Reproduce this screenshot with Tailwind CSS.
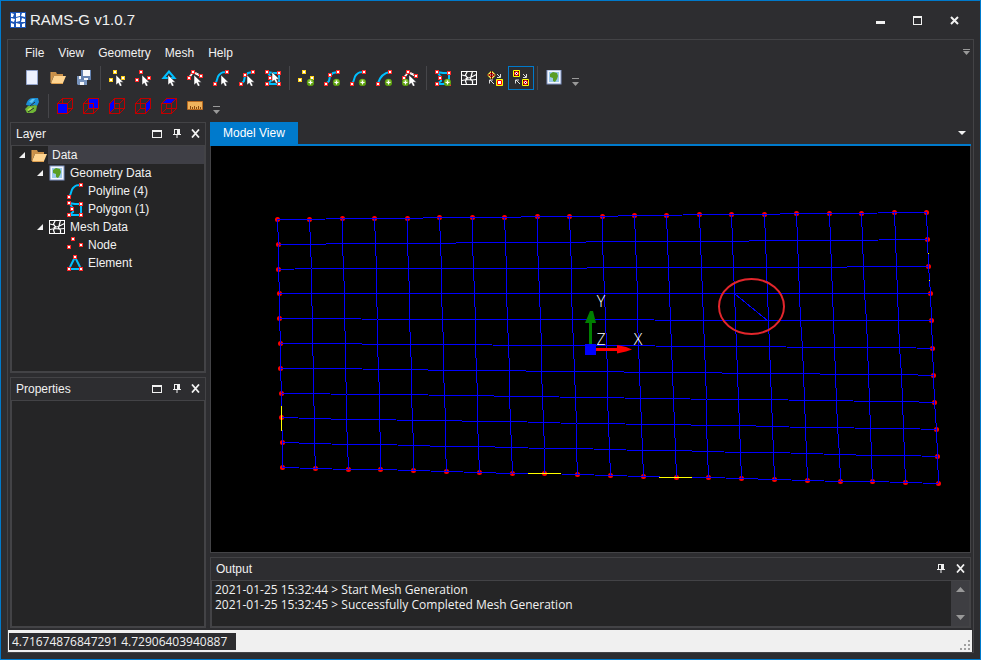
<!DOCTYPE html>
<html lang="en">
<head>
<meta charset="UTF-8">
<meta name="viewport" content="width=device-width, initial-scale=1.0">
<title>RAMS-G v1.0.7</title>
<script src="https://cdn.jsdelivr.net/npm/@tailwindcss/browser@4"></script>
</head>
<body class="bg-[#2d2d30] text-[#f1f1f1] font-['Liberation_Sans',sans-serif] text-[12px]">

<!-- icon set, all on a 16px grid -->
<svg class="hidden">
  <defs>
    <g id="red"><rect width="4" height="4" fill="#ff2a2a"/><rect x="1" y="1" width="2" height="2" fill="#fff"/></g>
    <g id="yel"><rect width="4" height="4" fill="#ffd21c"/><rect x="1" y="1" width="2" height="2" fill="#fff"/></g>
    <path id="cursor" d="M7 5v10l2.300-2 1.700 3.500 2-1-1.600-3.300H14.500z" fill="#fff" stroke="#2d2d30" stroke-width=".5"/>
    <g id="plus"><circle cx="12.500" cy="12.500" r="3.700" fill="#5c9e10"/><circle cx="12.500" cy="11.500" r="2.300" fill="#8bc53a"/><path d="M12.500 10.500v4M10.500 12.500h4" stroke="#fff" stroke-width="1.200"/></g>
    <g id="curve"><path d="M2 13C5 12 3 8 6 5S10 2 14 2" fill="none" stroke="#00bfff" stroke-width="2"/><use href="#red" y="12"/><use href="#red" x="12"/></g>
    <g id="arc"><path d="M2 13C4 7 7 3 14 2" fill="none" stroke="#00bfff" stroke-width="2"/><use href="#red" y="12"/><use href="#red" x="12"/></g>
    <g id="polyline"><path d="M2 14l3-3 1-5 3-3 5-1" fill="none" stroke="#00bfff" stroke-width="2"/><use href="#red" y="12"/><use href="#red" x="4" y="3"/><use href="#red" x="12"/></g>
    <g id="polygon"><path d="M2 2l6 1 6 0v11H2l4-3V7z" fill="none" stroke="#00bfff" stroke-width="2"/><use href="#red"/><use href="#red" x="12" y="1"/><use href="#red" x="3" y="6"/><use href="#red" y="12"/><use href="#red" x="12" y="12"/></g>
    <g id="edges"><path d="M2 8l4-6 8 4" fill="none" stroke="#fff" stroke-width="2"/><path d="M3 5l3-3 4 1M11 4l3 2" fill="none" stroke="#c88" stroke-width="1"/><use href="#red" y="6"/><use href="#red" x="4"/><use href="#red" x="12" y="4"/></g>
    <g id="nodes"><use href="#red" x="4"/><use href="#red" y="8"/><use href="#red" x="12" y="6"/></g>
    <g id="points"><use href="#yel" x="4"/><use href="#yel" y="8"/><use href="#yel" x="12" y="6"/></g>
    <g id="element"><path d="M8 2L2 14h12z" fill="none" stroke="#00bfff" stroke-width="2"/><use href="#red" x="6"/><use href="#red" y="12"/><use href="#red" x="12" y="12"/></g>
    <g id="mesh" fill="none" stroke="#fff"><path d="M.5 1.500h15v13H.5z" shape-rendering="crispEdges"/><path d="M6.500 1l-2 4 2 3-2 3 1 3M11.500 1l-1 4-1 4 2 2v3M1 5l4 1M4.500 8.500l5-1 6-3M1 10.500l5-1 4 .5 5.500-.5" stroke-width="1.200"/></g>
    <g id="folder"><path d="M1 3h5l1 2h6v2H4L1 13z" fill="#c8904a"/><path d="M1 14l3-7h12l-3 7z" fill="#ffd591"/><path d="M1 3v11l1 .5h11" fill="none" stroke="#dfa050"/></g>
    <g id="map"><rect x="1" y="1" width="14" height="14" fill="#f4f8ff" stroke="#7f93c4"/><rect x="3" y="3" width="10" height="10" fill="#9cc9ea"/><path d="M4 5l3-2 4 1 1 3-1 3-2 3-2-1V9L4 8z" fill="#5a9e24"/></g>
    <g id="cube" fill="none" stroke="#c00000" shape-rendering="crispEdges"><path d="M.5 5.500h10v10H.5zM5.500.5h10v10h-10zM.5 5.500l5-5M10.500 5.500l5-5M.5 15.500l5-5M10.500 15.500l5-5"/></g>
    <g id="float"><path d="M0 1h10v8H0zM1 3v5h8V3z" fill="#f1f1f1" fill-rule="evenodd"/></g>
    <path id="pin" d="M1 0h6v5h1v1H4.500v3h-1V6H0V5h1zM2 1v4h2V1z" fill="#f1f1f1" fill-rule="evenodd"/>
    <path id="close" d="M1 .5l7 8M8 .5l-7 8" stroke="#f1f1f1" stroke-width="1.800"/>
    <path id="expand" d="M6 0v6H0z" fill="#f1f1f1"/>
    <g id="more" fill="#999"><rect width="7" height="1"/><path d="M0 4h7L3.500 8z"/></g>
    <pattern id="dots" width="4" height="4" patternUnits="userSpaceOnUse"><path d="M0 0h1v1H0zM2 2h1v1H2z" fill="#4b4b50"/></pattern>
  </defs>
</svg>

<div class="min-h-screen flex flex-col border border-[#007acc]">

  <header class="h-[38px] flex items-center pl-2 pr-[7px]">
    <svg class="size-4 mx-px" viewBox="0 0 16 16"><path fill="#1c56b8" d="M0 0h16v16H0z"/><path fill="#fff" d="M1 1l3 1-1 3H1zM6 1h4v3L6 5zM12 1h3v4l-4-1zM1 6l4 1-1 3-3-1zM6 6l4-1v4L6 10zM12 6l3 1v3h-4zM1 11l3 1v3H1zM6 11l4 1v3H6zM12 12l3-1v4h-3z"/></svg>
    <h1 class="ml-[3px] flex-1 text-[15px]">RAMS-G v1.0.7</h1>
    <button aria-label="Minimize" class="w-[37px] flex justify-center"><svg class="w-[9px] h-[9px]"><path fill="#f1f1f1" d="M0 5h9v3H0z"/></svg></button>
    <button aria-label="Maximize" class="w-[37px] flex justify-center"><svg class="w-[9px] h-[9px]"><path fill="#f1f1f1" fill-rule="evenodd" d="M0 0h9v9H0zM1 2v6h7V2z"/></svg></button>
    <button aria-label="Close" class="w-[37px] flex justify-center"><svg class="w-[9px] h-[9px]"><path stroke="#f1f1f1" stroke-width="2" d="M1 1l7 7M8 1L1 8"/></svg></button>
  </header>

  <div class="flex-1 flex flex-col mx-1.5 mb-1.5 border border-[#434346]">

    <nav class="h-[25px] pt-px flex items-center px-[3px]">
      <svg class="w-[6px] h-[18px] mr-2"><rect width="6" height="18" fill="url(#dots)"/></svg>
      <ul class="flex flex-1 gap-[14px]">
        <li><a href="#">File</a></li>
        <li><a href="#">View</a></li>
        <li><a href="#">Geometry</a></li>
        <li><a href="#">Mesh</a></li>
        <li><a href="#">Help</a></li>
      </ul>
      <button aria-label="Menu options"><svg class="w-[7px] h-2"><path fill="#999" d="M0 0h7v1H0zM0 2h7L3.500 6z"/></svg></button>
    </nav>

    <div class="h-[26px] flex items-center pl-[3px]" role="toolbar">
      <svg class="w-[6px] h-[18px] mr-0.5"><rect width="6" height="18" fill="url(#dots)"/></svg>
      <button aria-label="New" class="w-[26px] h-6 flex items-center justify-center"><svg class="size-4"><path d="M2.500.5h11v14h-11z" fill="#edf2ff" stroke="#94a5cc"/></svg></button>
      <button aria-label="Open" class="w-[26px] h-6 flex items-center justify-center"><svg class="size-4"><use href="#folder" y="-1"/></svg></button>
      <button aria-label="Save all" class="w-[26px] h-6 flex items-center justify-center"><svg class="size-4"><path fill="#7894bd" d="M1 6h10v9H2l-1-1z"/><path fill="#f5f7fb" d="M3 6h6v3H3zM4 12h4v3H4z"/><path fill="#6482b0" d="M5 0h10v10H5z"/><path fill="#f5f7fb" d="M7 0h7v6H7zM8 8h4v2H8z"/></svg></button>
      <span class="w-[7px] h-6 flex justify-center"><i class="w-px bg-[#46464a]"></i></span>
      <button aria-label="Select point" class="w-[26px] h-6 flex items-center justify-center"><svg class="size-4"><use href="#points"/><use href="#cursor"/></svg></button>
      <button aria-label="Select node" class="w-[26px] h-6 flex items-center justify-center"><svg class="size-4"><use href="#nodes"/><use href="#cursor"/></svg></button>
      <button aria-label="Select element" class="w-[26px] h-6 flex items-center justify-center"><svg class="size-4"><path d="M8 1.500L2.500 8h11z" fill="none" stroke="#00bfff" stroke-width="2"/><use href="#cursor"/></svg></button>
      <button aria-label="Select edge" class="w-[26px] h-6 flex items-center justify-center"><svg class="size-4"><use href="#edges"/><use href="#cursor"/></svg></button>
      <button aria-label="Select curve" class="w-[26px] h-6 flex items-center justify-center"><svg class="size-4"><use href="#curve"/><use href="#cursor" x="1"/></svg></button>
      <button aria-label="Select polyline" class="w-[26px] h-6 flex items-center justify-center"><svg class="size-4"><use href="#polyline"/><use href="#cursor" x="1"/></svg></button>
      <button aria-label="Select polygon" class="w-[26px] h-6 flex items-center justify-center"><svg class="size-4"><use href="#polygon"/><use href="#cursor" y="-3"/></svg></button>
      <span class="w-[7px] h-6 flex justify-center"><i class="w-px bg-[#46464a]"></i></span>
      <button aria-label="Add point" class="w-[26px] h-6 flex items-center justify-center"><svg class="size-4"><use href="#points"/><use href="#plus"/></svg></button>
      <button aria-label="Add polyline" class="w-[26px] h-6 flex items-center justify-center"><svg class="size-4"><use href="#polyline"/><use href="#plus"/></svg></button>
      <button aria-label="Add curve" class="w-[26px] h-6 flex items-center justify-center"><svg class="size-4"><use href="#curve"/><use href="#plus"/></svg></button>
      <button aria-label="Add arc" class="w-[26px] h-6 flex items-center justify-center"><svg class="size-4"><use href="#arc"/><use href="#plus"/></svg></button>
      <button aria-label="Add from edges" class="w-[26px] h-6 flex items-center justify-center"><svg class="size-4"><use href="#edges"/><use href="#plus" x="-9"/><use href="#cursor"/></svg></button>
      <span class="w-[7px] h-6 flex justify-center"><i class="w-px bg-[#46464a]"></i></span>
      <button aria-label="Add polygon" class="w-[26px] h-6 flex items-center justify-center"><svg class="size-4"><use href="#polygon"/><use href="#plus"/></svg></button>
      <button aria-label="Generate mesh" class="w-[26px] h-6 flex items-center justify-center"><svg class="size-4"><use href="#mesh"/></svg></button>
      <button aria-label="Refine" class="w-[26px] h-6 flex items-center justify-center"><svg class="size-4"><path d="M4.500 1l4 4-4 4-4-4z" fill="#fff" stroke="#ff0"/><path d="M4.500 2.500L7 5 4.500 7.500 2 5z" fill="#fff" stroke="#f00"/><path d="M0 5h9M4.500 1v8" stroke="#600"/><path d="M10 4l3 3M13.500 4v3.500H10M7 14l-4-4M2.500 13.500V10H6" fill="none" stroke="#ddd"/><path d="M9.500 9.500h6v6h-6z" fill="#fff" stroke="#ff0"/><path d="M10.500 10.500h4v4h-4z" fill="#fff" stroke="#f00"/></svg></button>
      <button aria-label="Snap" aria-pressed="true" class="w-[26px] h-6 flex items-center justify-center border border-[#007acc]"><svg class="size-4"><path d="M.5.5h6v6h-6zM9.500 9.500h6v6h-6z" fill="#300" stroke="#ff0"/><circle cx="3.500" cy="3.500" r="2" fill="#fff" stroke="#f00"/><circle cx="12.500" cy="12.500" r="2" fill="#fff" stroke="#f00"/><path d="M3 4l1-1M12 13l1-1" stroke="#000"/><path d="M10 4l3 3M13.500 4v3.500H10M7 14l-4-4M2.500 13.500V10H6" fill="none" stroke="#ddd"/></svg></button>
      <span class="w-[7px] h-6 flex justify-center"><i class="w-px bg-[#46464a]"></i></span>
      <button aria-label="Map" class="w-[26px] h-6 flex items-center justify-center"><svg class="size-4"><use href="#map" y="-1"/></svg></button>
      <button aria-label="More" class="w-[17px] h-6 flex items-end justify-center pb-1"><svg class="w-[7px] h-2"><use href="#more"/></svg></button>
    </div>

    <div class="h-[29px] pt-px flex items-center pl-[3px]" role="toolbar">
      <svg class="w-[6px] h-[18px] mr-0.5"><rect width="6" height="18" fill="url(#dots)"/></svg>
      <button aria-label="Redraw" class="w-[26px] h-6 flex items-center justify-center"><svg class="size-4"><path fill="#1c8fd6" d="M2 7C3 3 5 0 9 0h5l1 4-2 4-3-1-3 1z"/><path fill="#5cc3f2" d="M5 4l3-3h3L8 5z"/><path fill="#6fb536" d="M1 11l3-3h4l3-1 2 1-1 5-3 2H3z"/><path fill="#b5dd55" d="M3 12l4-3 1 2-3 2z"/><path d="M6 8l5-4M4 14l6-4" stroke="#2d2d30" fill="none"/></svg></button>
      <span class="w-[7px] h-6 flex justify-center"><i class="w-px bg-[#46464a]"></i></span>
      <button aria-label="Front view" class="w-[26px] h-6 flex items-center justify-center"><svg class="size-4"><use href="#cube"/><path fill="#00f" d="M1 6h9v9H1z"/></svg></button>
      <button aria-label="Back view" class="w-[26px] h-6 flex items-center justify-center"><svg class="size-4"><use href="#cube"/><path fill="#00f" d="M6 1h9v9H6z"/><path d="M6 5.500h5M10.500 5v5" stroke="#c00000"/></svg></button>
      <button aria-label="Left view" class="w-[26px] h-6 flex items-center justify-center"><svg class="size-4"><use href="#cube"/><path fill="#00f" d="M1 6l4-4v8l-4 4z"/></svg></button>
      <button aria-label="Right view" class="w-[26px] h-6 flex items-center justify-center"><svg class="size-4"><use href="#cube"/><path fill="#00f" d="M11 6l4-4v8l-4 4z"/></svg></button>
      <button aria-label="Top view" class="w-[26px] h-6 flex items-center justify-center"><svg class="size-4"><use href="#cube"/><path fill="#00f" d="M2 5l4-4h8l-4 4z"/></svg></button>
      <button aria-label="Measure" class="w-[26px] h-6 flex items-center justify-center"><svg class="size-4"><path fill="#f0b35c" stroke="#b86a20" d="M.5 3.500h15v8H.5z"/><path stroke="#8a4a10" d="M3.500 11V8M5.500 11V9M7.500 11V8M9.500 11V9M11.500 11V8M13.500 11V9"/></svg></button>
      <button aria-label="More" class="w-[17px] h-6 flex items-end justify-center pb-1"><svg class="w-[7px] h-2"><use href="#more"/></svg></button>
    </div>

    <div class="flex-1 flex gap-1 pt-0.5 px-0.5 pb-0.5">

      <aside class="w-[196px] shrink-0 flex flex-col gap-1">
        <section class="flex-1 flex flex-col border border-[#434346]">
          <div class="h-[22px] flex items-center pl-[5px] pr-[5px] pb-0.5">
            <h2 class="flex-1 pt-0.5 text-[12px]">Layer</h2>
            <button aria-label="Float" class="mr-[11px]"><svg class="w-[10px] h-[9px]"><use href="#float"/></svg></button>
            <button aria-label="Pin" class="mr-[10px]"><svg class="w-[8px] h-[9px]"><use href="#pin"/></svg></button>
            <button aria-label="Close"><svg class="w-[9px] h-[9px]"><use href="#close"/></svg></button>
          </div>
          <div class="flex-1 border border-[#434346] bg-[#252526]">
            <ul>
              <li>
                <div class="h-[18px] flex items-center pl-[7px]"><svg class="w-[6px] h-[6px] mr-1.5"><use href="#expand"/></svg><svg class="size-4 mr-px"><use href="#folder"/></svg><span class="flex-1 h-full pl-1 leading-[18px] bg-[#3f3f46]">Data</span></div>
                <ul>
                  <li>
                    <div class="h-[18px] flex items-center pl-[25px]"><svg class="w-[6px] h-[6px] mr-1.5"><use href="#expand"/></svg><svg class="size-4 mr-[5px]"><use href="#map"/></svg>Geometry Data</div>
                    <ul>
                      <li class="h-[18px] flex items-center pl-[55px]"><svg class="size-4 mr-[5px]"><use href="#curve"/></svg>Polyline (4)</li>
                      <li class="h-[18px] flex items-center pl-[55px]"><svg class="size-4 mr-[5px]"><use href="#polygon"/></svg>Polygon (1)</li>
                    </ul>
                  </li>
                  <li>
                    <div class="h-[18px] flex items-center pl-[25px]"><svg class="w-[6px] h-[6px] mr-1.5"><use href="#expand"/></svg><svg class="size-4 mr-[5px]"><use href="#mesh"/></svg>Mesh Data</div>
                    <ul>
                      <li class="h-[18px] flex items-center pl-[55px]"><svg class="size-4 mr-[5px]"><use href="#nodes"/></svg>Node</li>
                      <li class="h-[18px] flex items-center pl-[55px]"><svg class="size-4 mr-[5px]"><use href="#element"/></svg>Element</li>
                    </ul>
                  </li>
                </ul>
              </li>
            </ul>
          </div>
        </section>

        <section class="flex-1 flex flex-col border border-[#434346]">
          <div class="h-[22px] flex items-center pl-[5px] pr-[5px] pb-0.5">
            <h2 class="flex-1 pt-0.5 text-[12px]">Properties</h2>
            <button aria-label="Float" class="mr-[11px]"><svg class="w-[10px] h-[9px]"><use href="#float"/></svg></button>
            <button aria-label="Pin" class="mr-[10px]"><svg class="w-[8px] h-[9px]"><use href="#pin"/></svg></button>
            <button aria-label="Close"><svg class="w-[9px] h-[9px]"><use href="#close"/></svg></button>
          </div>
          <div class="flex-1 border border-[#434346] bg-[#252526]"></div>
        </section>
      </aside>

      <main class="flex-1 min-w-0 flex flex-col">
        <div class="h-6 flex items-center justify-between border-b-2 border-[#007acc] pr-[5px]">
          <button class="h-full px-[13px] bg-[#007acc] text-white">Model View</button>
          <button aria-label="Window list"><svg class="w-[8px] h-1"><path fill="#f1f1f1" d="M0 0h8L4 4z"/></svg></button>
        </div>
        <div class="flex-1 min-h-0 border border-t-0 border-[#434346] bg-black mb-1">
          <svg class="w-full h-full" viewBox="0 0 759 406">
            <g id="meshNodes" fill="#f00"></g>
            <path id="meshLines" fill="none" stroke="#00f" shape-rendering="crispEdges"/>
            <path d="M524 148l33 27" stroke="#00f" shape-rendering="crispEdges"/>
            <path d="M70.500 260v25M317 327.500h33M448 331.500h33M717.500 107v1M718.500 134v1" stroke="#ff0" shape-rendering="crispEdges"/>
            <path d="M378 176h3v22h-3z" fill="#008000"/>
            <path d="M374 177h11l-3-12h-3z" fill="#008000"/>
            <path d="M385 202h21v3h-21z" fill="#f00"/>
            <path d="M406 199l9 2 6 2.500-6 2-9 2z" fill="#f00"/>
            <path d="M374 198h11v11h-11z" fill="#00f"/>
            <g class="text-[16px] font-['Open_Sans',sans-serif] font-light" fill="#fff" text-anchor="middle">
              <text x="390" y="161">Y</text>
              <text x="390" y="199">Z</text>
              <text x="427" y="199">X</text>
            </g>
            <ellipse cx="540.500" cy="160.500" rx="32.500" ry="27.500" fill="none" stroke="#e3262c" stroke-width="2"/>
          </svg>
        </div>

        <section class="h-[71px] flex flex-col border border-[#434346]">
          <div class="h-[22px] flex items-center pl-[5px] pr-[5px] pb-0.5">
            <h2 class="flex-1 pt-0.5 text-[12px]">Output</h2>
            <button aria-label="Pin" class="mr-[11px]"><svg class="w-[8px] h-[9px]"><use href="#pin"/></svg></button>
            <button aria-label="Close"><svg class="w-[9px] h-[9px]"><use href="#close"/></svg></button>
          </div>
          <div class="flex-1 flex border border-[#434346] bg-[#252526]">
            <textarea readonly aria-label="Output" class="flex-1 resize-none overflow-hidden pt-px pl-[3px] font-['Open_Sans',sans-serif] leading-[15px]">2021-01-25 15:32:44 &gt; Start Mesh Generation
2021-01-25 15:32:45 &gt; Successfully Completed Mesh Generation</textarea>
            <div class="w-[18px] bg-[#3e3e42] flex flex-col items-center justify-between py-1.5">
              <button aria-label="Scroll up" class="flex"><svg class="w-[9px] h-[5px]"><path fill="#999" d="M0 5h9L4.500 0z"/></svg></button>
              <button aria-label="Scroll down" class="flex"><svg class="w-[9px] h-[5px]"><path fill="#999" d="M0 0h9L4.500 5z"/></svg></button>
            </div>
          </div>
        </section>
      </main>
    </div>

    <footer class="h-[22px] flex items-center justify-between bg-[#f0f0f0] pl-px pr-0.5 mr-px">
      <span class="w-[227px] h-[17px] px-[3px] bg-[#2d2d30] font-['Open_Sans',sans-serif] leading-[17px]">4.71674876847291 4.72906403940887</span>
      <svg class="w-[10px] h-[10px] self-end mb-0.5"><path fill="#a0a0a0" d="M8 0h2v2H8zM4 4h2v2H4zM8 4h2v2H8zM0 8h2v2H0zM4 8h2v2H4zM8 8h2v2H8z"/></svg>
    </footer>
  </div>
</div>

<script>
// 20 x 10 quad mesh, interpolated between the four corners and snapped to whole pixels
const COLS = 20, ROWS = 10;
const tl = [66, 73], tr = [715, 66], bl = [71, 321], br = [727, 337];

function node(c, r) {
  const u = c / COLS, v = r / ROWS;
  return [0, 1].map(k => Math.round((1 - v) * ((1 - u) * tl[k] + u * tr[k]) + v * ((1 - u) * bl[k] + u * br[k])) + 0.5);
}

let d = '', dots = '';
for (let r = 0; r <= ROWS; r++) {
  for (let c = 0; c <= COLS; c++) {
    const [x, y] = node(c, r);
    if (c < COLS) d += `M${x},${y}L${node(c + 1, r)}`;
    if (r < ROWS) d += `M${x},${y}L${node(c, r + 1)}`;
    if (r % ROWS === 0 || c % COLS === 0) dots += `<circle cx="${x}" cy="${y}" r="2.5"/>`;
  }
}
document.getElementById('meshLines').setAttribute('d', d);
document.getElementById('meshNodes').innerHTML = dots;
</script>
</body>
</html>
